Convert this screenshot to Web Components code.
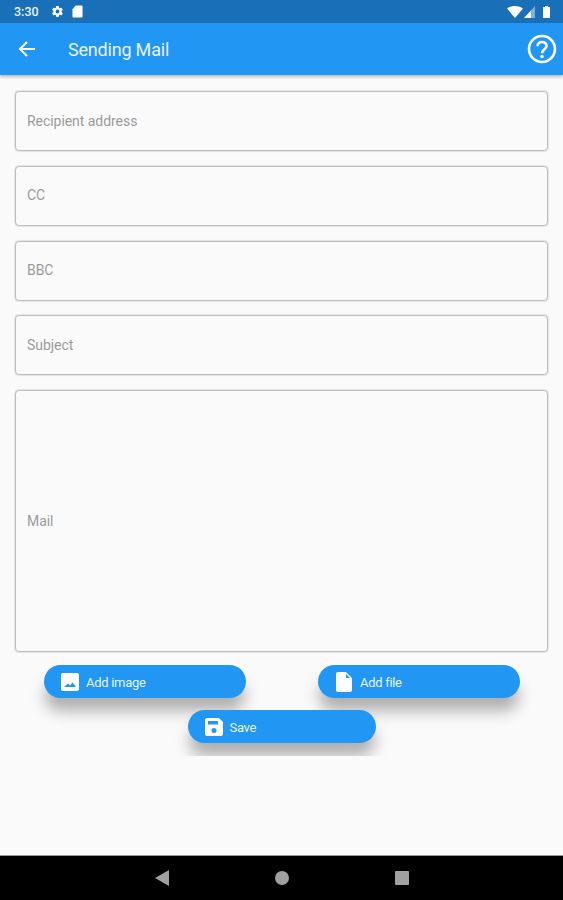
<!DOCTYPE html>
<html>
<head>
<meta charset="utf-8">
<title>Sending Mail</title>
<style>
  html, body { margin: 0; height: 100%; background: #fafafa; }
  body { font-family: Roboto, "Liberation Sans", sans-serif; }
</style>
</head>
<body>
<mail-screen>
  <status-bar slot="top" time="3:30"></status-bar>
  <app-bar slot="top" title="Sending Mail"></app-bar>
  <outlined-field label="Recipient address"></outlined-field>
  <outlined-field label="CC"></outlined-field>
  <outlined-field label="BBC"></outlined-field>
  <outlined-field label="Subject"></outlined-field>
  <outlined-field label="Mail" tall></outlined-field>
  <pill-button slot="row" icon="image" width="202">Add image</pill-button>
  <pill-button slot="row" icon="file" width="202">Add file</pill-button>
  <pill-button slot="center" icon="save" width="188">Save</pill-button>
  <nav-bar slot="bottom"></nav-bar>
</mail-screen>

<script>
class MailScreen extends HTMLElement {
  shadowRoot = this.attachShadow({ mode: 'open' });
  connectedCallback() {
    this.shadowRoot.innerHTML = `
      <style>
        :host { display: flex; flex-direction: column; height: 900px; width: 563px; overflow: hidden; background: #fafafa; }
        .fields { display: flex; flex-direction: column; gap: 14.8px; padding: 16px 15px 0 15px; }
        .actions { display: flex; flex-direction: column; gap: 12px; padding-top: 13px; height: 104px; box-sizing: border-box; overflow: hidden; }
        .row { display: flex; gap: 72px; padding-left: 44px; }
        .center { display: flex; justify-content: center; }
        .spacer { flex: 1; }
      </style>
      <slot name="top"></slot>
      <div class="fields"><slot></slot></div>
      <div class="actions">
        <div class="row"><slot name="row"></slot></div>
        <div class="center"><slot name="center"></slot></div>
      </div>
      <div class="spacer"></div>
      <slot name="bottom"></slot>
    `;
  }
}

class StatusBar extends HTMLElement {
  shadowRoot = this.attachShadow({ mode: 'open' });
  connectedCallback() {
    const time = this.getAttribute('time') || '';
    this.shadowRoot.innerHTML = `
      <style>
        :host { display: flex; align-items: center; height: 23px; background: #1a70b8; color: #fff; padding: 0 13px 0 14px; box-sizing: border-box; }
        .time { font-size: 12.5px; font-weight: 500; margin-right: 12px; color: #eaf3fa; }
        .left { display: flex; align-items: center; gap: 8px; }
        .right { margin-left: auto; display: flex; align-items: center; gap: 1px; }
        svg { display: block; fill: #fff; }
      </style>
      <span class="time">${time}</span>
      <div class="left">
        <svg width="13" height="13" viewBox="0 0 24 24"><path d="M19.4 13c.1-.3.1-.7.1-1s0-.7-.1-1l2.1-1.6c.2-.2.2-.4.1-.6l-2-3.5c-.1-.2-.4-.3-.6-.2l-2.5 1c-.5-.4-1.100-.7-1.700-1l-.4-2.700c0-.2-.2-.4-.5-.4h-4c-.3 0-.5.2-.5.4l-.4 2.700c-.6.3-1.200.6-1.700 1l-2.500-1c-.2-.1-.5 0-.6.2l-2 3.500c-.1.2-.1.4.1.600L4.500 11c-.1.3-.1.7-.1 1s0 .7.1 1l-2.100 1.600c-.2.2-.2.4-.1.6l2 3.500c.1.2.4.3.6.2l2.500-1c.5.4 1.100.7 1.700 1l.4 2.700c0 .2.2.4.5.4h4c.3 0 .5-.2.5-.4l.4-2.700c.6-.3 1.200-.6 1.700-1l2.500 1c.2.1.5 0 .6-.2l2-3.500c.1-.2.1-.4-.1-.6zM12 15.500a3.500 3.500 0 1 1 0-7 3.500 3.500 0 0 1 0 7z"/></svg>
        <svg width="11" height="13" viewBox="0 0 12 14"><path d="M4 .5h6.500c.6 0 1 .4 1 1v11c0 .6-.4 1-1 1h-9c-.6 0-1-.4-1-1v-8z"/></svg>
      </div>
      <div class="right">
        <svg width="16" height="12" viewBox="0 0 16 12"><path d="M0 2.500C2 .9 4.900 0 8 0s6 .9 8 2.500L8 12z"/></svg>
        <svg width="11" height="12" viewBox="0 0 11 12"><path d="M11 0v12H0z" fill-opacity=".45"/><path d="M7 4.500V12H0z"/></svg>
        <svg style="margin-left:7px" width="7" height="12" viewBox="0 0 7 12"><path d="M2 0h3v1h1.500c.3 0 .5.2.5.5V12H0V1.500c0-.3.2-.5.5-.5H2z"/></svg>
      </div>
    `;
  }
}

class AppBar extends HTMLElement {
  shadowRoot = this.attachShadow({ mode: 'open' });
  connectedCallback() {
    const title = this.getAttribute('title') || '';
    this.removeAttribute('title');
    this.shadowRoot.innerHTML = `
      <style>
        :host { display: flex; align-items: center; height: 52px; background: #2196f3; color: #fff; box-shadow: 0 2px 3px rgba(0,0,0,.25); position: relative; padding: 0 6px 0 18px; box-sizing: border-box; }
        .title { font-size: 18px; margin-left: 32px; color: #e8f4fe; letter-spacing: -.2px; }
        .help { margin-left: auto; display: block; }
        svg { display: block; }
      </style>
      <svg width="18" height="18" viewBox="0 0 18 18" fill="none" stroke="#fff" stroke-width="2"><path d="M17 9H2M9 2 2 9l7 7"/></svg>
      <span class="title">${title}</span>
      <svg class="help" width="30" height="30" viewBox="0 0 30 30" fill="none" stroke="#fff" stroke-width="2.600">
        <circle cx="15" cy="15" r="13"/>
        <path d="M10.500 12.200c0-2.600 2-4.200 4.500-4.200s4.500 1.600 4.500 4c0 3.500-4.500 3.600-4.500 7.200"/>
        <circle cx="15" cy="22.500" r="1.700" fill="#fff" stroke="none"/>
      </svg>
    `;
  }
}

class OutlinedField extends HTMLElement {
  shadowRoot = this.attachShadow({ mode: 'open' });
  connectedCallback() {
    const label = this.getAttribute('label') || '';
    const height = this.hasAttribute('tall') ? 262 : 60;
    this.shadowRoot.innerHTML = `
      <style>
        :host { display: flex; align-items: center; height: ${height}px; box-sizing: border-box; border: 1px solid #bdbdbd; box-shadow: 0 0 1.5px rgba(0,0,0,.4); border-radius: 4px; padding: 0 11px 1px; }
        span { font-size: 14px; color: #9a9a9a; letter-spacing: -.05px; }
      </style>
      <span>${label}</span>
    `;
  }
}

const PILL_ICONS = {
  image: `<svg width="18" height="18" viewBox="0 0 18 18"><path fill="#fff" fill-rule="evenodd" d="M2 0h14c1.100 0 2 .9 2 2v14c0 1.100-.9 2-2 2H2c-1.100 0-2-.9-2-2V2C0 .9.900 0 2 0zM3 14h12l-3.500-4.500-2.500 3-1.800-2z"/></svg>`,
  file: `<svg width="16" height="20" viewBox="0 0 16 20"><path fill="#fff" fill-rule="evenodd" d="M2 0h8l6 6v12c0 1.100-.9 2-2 2H2c-1.100 0-2-.9-2-2V2C0 .9.900 0 2 0zM10 2v4h4z"/></svg>`,
  save: `<svg width="18" height="18" viewBox="0 0 18 18"><path fill="#fff" fill-rule="evenodd" d="M2 0h12l4 4v12c0 1.100-.9 2-2 2H2c-1.100 0-2-.9-2-2V2C0 .9.900 0 2 0zM3 3v3.500h10V3zM9 15a2.500 2.500 0 1 0 0-5 2.500 2.500 0 0 0 0 5z"/></svg>`,
};

class PillButton extends HTMLElement {
  shadowRoot = this.attachShadow({ mode: 'open' });
  connectedCallback() {
    const icon = PILL_ICONS[this.getAttribute('icon')] || '';
    const width = this.getAttribute('width') || 200;
    this.shadowRoot.innerHTML = `
      <style>
        :host { display: flex; align-items: center; width: ${width}px; height: 33px; flex: none; box-sizing: border-box; padding-left: 17px; background: #2196f3; border-radius: 17px; color: #e8f4fe; box-shadow: 0 14px 15px -1px rgba(0,0,0,.3); }
        .icon { width: 18px; display: flex; justify-content: center; margin-right: 7px; }
        svg { display: block; }
        span { font-size: 13px; letter-spacing: -.3px; padding-top: 2px; }
      </style>
      <div class="icon">${icon}</div>
      <span><slot></slot></span>
    `;
  }
}

class NavBar extends HTMLElement {
  shadowRoot = this.attachShadow({ mode: 'open' });
  connectedCallback() {
    this.shadowRoot.innerHTML = `
      <style>
        :host { display: flex; align-items: center; justify-content: center; gap: 106px; height: 44px; padding-left: 1px; background: #000; box-shadow: 0 -1px 0 #9a9a9a; }
        svg { display: block; fill: #a0a0a0; }
      </style>
      <svg width="14" height="16" viewBox="0 0 14 16"><path d="M14 0v16L0 8z"/></svg>
      <svg width="14" height="14" viewBox="0 0 14 14"><circle cx="7" cy="7" r="7"/></svg>
      <svg width="14" height="14" viewBox="0 0 14 14"><rect width="14" height="14" rx="1"/></svg>
    `;
  }
}

customElements.define('mail-screen', MailScreen);
customElements.define('status-bar', StatusBar);
customElements.define('app-bar', AppBar);
customElements.define('outlined-field', OutlinedField);
customElements.define('pill-button', PillButton);
customElements.define('nav-bar', NavBar);
</script>
</body>
</html>
